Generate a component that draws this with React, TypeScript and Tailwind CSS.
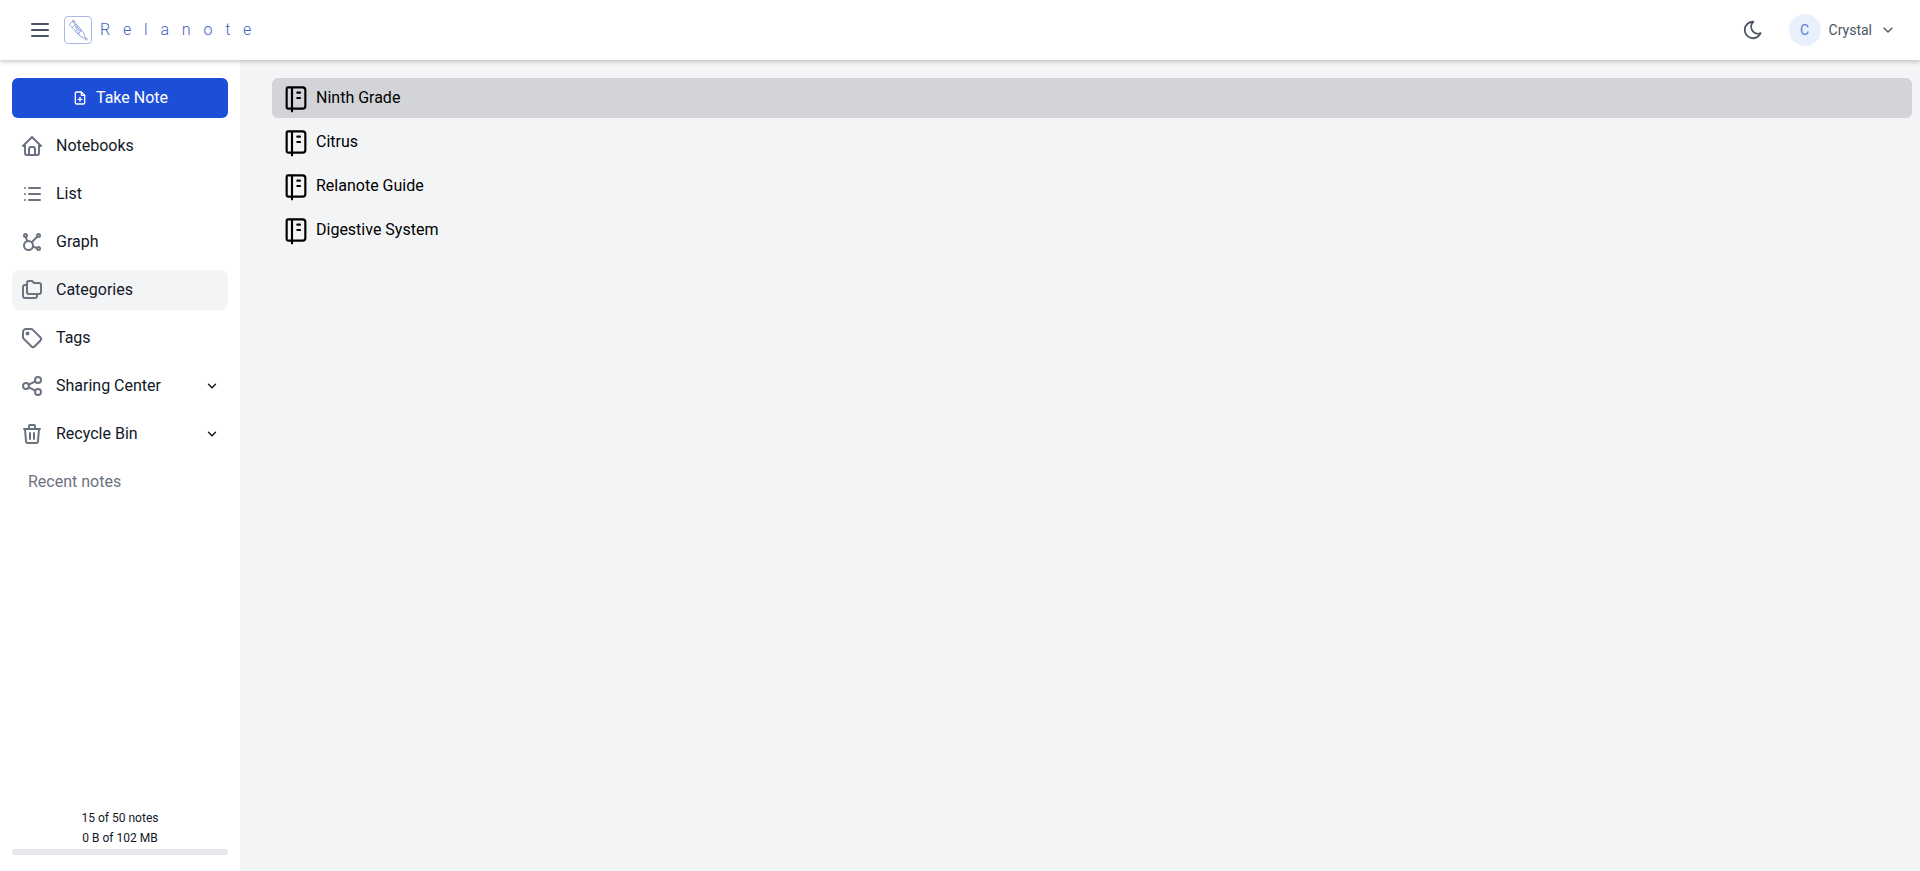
import React from 'react';
import {
  TbMenu2,
  TbFilePlus,
  TbHome,
  TbList,
  TbAffiliate,
  TbFolders,
  TbTag,
  TbShare,
  TbTrash,
  TbChevronDown,
  TbNotebook,
  TbMoon,
} from 'react-icons/tb';

const navItems = [
  { name: 'Notebooks', icon: TbHome },
  { name: 'List', icon: TbList },
  { name: 'Graph', icon: TbAffiliate },
  { name: 'Categories', icon: TbFolders, active: true },
  { name: 'Tags', icon: TbTag },
  { name: 'Sharing Center', icon: TbShare, chevron: true },
  { name: 'Recycle Bin', icon: TbTrash, chevron: true },
];

const notebooks = ['Ninth Grade', 'Citrus', 'Relanote Guide', 'Digestive System'];

function Logo() {
  return (
    <div className="flex h-7 w-7 items-center justify-center rounded border border-[#a9b9e4]">
      <svg viewBox="0 0 28 28" className="h-7 w-7" fill="none" stroke="#8ea3dc" strokeWidth="1">
        <path d="M4.5 8 9 4 20 17 22.5 23.5 16 20.5Z" />
        <path d="M7.5 11.5 12 7.5M11 15.5 15.5 11.5M14 18 18 14.5" />
        <path d="M9 4 16 20.5" strokeWidth="0.7" />
        <circle cx="9" cy="4.5" r="1" />
        <circle cx="12.5" cy="11" r="1" />
        <circle cx="16" cy="14" r="1" />
        <circle cx="23" cy="24" r="1" />
      </svg>
    </div>
  );
}

export default function App() {
  return (
    <div className="flex h-[871px] flex-col overflow-hidden bg-[#f3f4f6] font-['Roboto',sans-serif] text-[#111827]">
      {/* Top bar */}
      <header className="relative z-10 flex h-[60px] shrink-0 items-center justify-between bg-white pl-[28px] pr-[24px] shadow-[0_2px_4px_rgba(0,0,0,0.2)]">
        <div className="flex items-center">
          <TbMenu2 size={24} strokeWidth={2} className="text-[#4b5563]" />
          <div className="ml-[12px]">
            <Logo />
          </div>
          <span className="ml-[8px] text-base font-light tracking-[0.8em] text-[#3f62c4]">Relanote</span>
        </div>
        <div className="flex items-center">
          <TbMoon size={22} strokeWidth={2} className="text-[#4b5563]" />
          <div className="ml-[25px] flex h-8 w-8 items-center justify-center rounded-full bg-[#e8f0fe] text-sm text-[#5f7fd6]">
            C
          </div>
          <span className="ml-2 text-sm text-[#4b5563]">Crystal</span>
          <TbChevronDown size={16} strokeWidth={2} className="ml-2 text-[#4b5563]" />
        </div>
      </header>

      <div className="flex min-h-0 flex-1">
        {/* Sidebar */}
        <aside className="flex w-[240px] shrink-0 flex-col bg-white px-3 pt-[18px]">
          <button className="flex h-10 items-center justify-center gap-2 rounded-md bg-[#1d4ed8] text-base text-white">
            <TbFilePlus size={16} strokeWidth={2} />
            Take Note
          </button>
          <nav className="mt-2 flex flex-col gap-2">
            {navItems.map((item) => (
              <div
                key={item.name}
                className={`flex h-10 items-center rounded-lg pl-2 pr-[9px] ${item.active ? 'bg-[#f3f4f6]' : ''}`}
              >
                <item.icon size={24} strokeWidth={2} className="text-[#6b7280]" />
                <span className="ml-3 flex-1 text-base">{item.name}</span>
                {item.chevron && <TbChevronDown size={14} strokeWidth={2.5} />}
              </div>
            ))}
          </nav>
          <div className="mt-2 pl-4 text-base leading-10 text-[#6b7280]">Recent notes</div>
          <div className="mt-auto pb-4 text-center text-xs text-[#111827]">
            <div className="leading-5">15 of 50 notes</div>
            <div className="leading-5">0 B of 102 MB</div>
            <div className="mt-[1px] h-1.5 rounded-full bg-[#e5e7eb]" />
          </div>
        </aside>

        {/* Notebook list */}
        <main className="flex flex-1 flex-col gap-1 pl-8 pr-2 pt-[18px] text-black">
          {notebooks.map((name, i) => (
            <div
              key={name}
              className={`flex h-10 items-center rounded-md pl-2 ${i === 0 ? 'bg-[#d3d4d7]' : ''}`}
            >
              <TbNotebook size={32} strokeWidth={1.6} />
              <span className="ml-1 text-base">{name}</span>
            </div>
          ))}
        </main>
      </div>
    </div>
  );
}
